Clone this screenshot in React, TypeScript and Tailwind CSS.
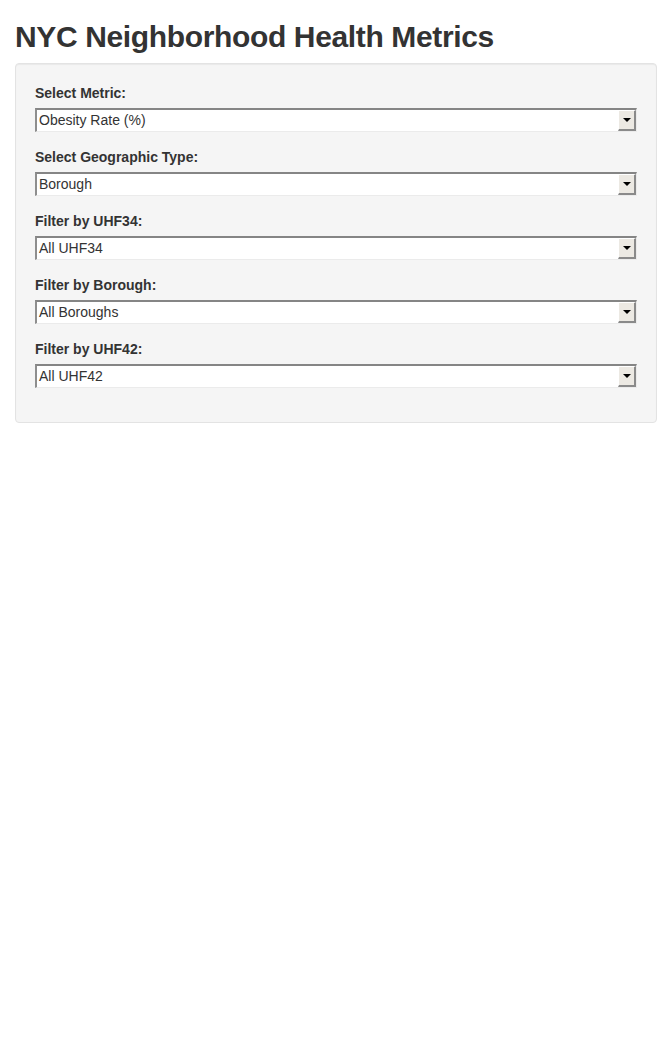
import React from 'react';

const filters = [
  { label: 'Select Metric:', value: 'Obesity Rate (%)' },
  { label: 'Select Geographic Type:', value: 'Borough' },
  { label: 'Filter by UHF34:', value: 'All UHF34' },
  { label: 'Filter by Borough:', value: 'All Boroughs' },
  { label: 'Filter by UHF42:', value: 'All UHF42' },
];

function SelectBox({ value }: { value: string }) {
  return (
    <div className="flex h-[24px] bg-white border-t-2 border-l-2 border-t-[#858585] border-l-[#8e8e8e] border-b border-r border-b-[#ebebeb] border-r-[#ebebeb]">
      <div className="flex-1 flex items-center pl-[2px] pb-[1px] text-[14px] text-[#333] leading-none">{value}</div>
      <div className="w-[18px] flex items-center justify-center bg-[#ece9e3] border-t border-l border-white border-r-2 border-b-2 border-r-[#8a8a8a] border-b-[#8a8a8a]">
        <div className="w-0 h-0 border-l-[4px] border-r-[4px] border-t-[4px] border-l-transparent border-r-transparent border-t-black" />
      </div>
    </div>
  );
}

export default function App() {
  return (
    <div className="min-h-[1043px] bg-white px-[15px] text-[#333]" style={{ fontFamily: '"Liberation Sans", Arial, sans-serif' }}>
      <h2 className="text-[30px] leading-[33px] font-bold tracking-[-0.36px] pt-[20px] mb-[10px]">NYC Neighborhood Health Metrics</h2>
      <div className="bg-[#f5f5f5] border border-[#e3e3e3] rounded-[4px] p-[19px] shadow-[inset_0_1px_1px_rgba(0,0,0,0.05)]">
        {filters.map((f, i) => (
          <div key={i} className="mb-[15px]">
            <label className="block text-[14px] leading-[20px] font-bold mb-[5px]">{f.label}</label>
            <SelectBox value={f.value} />
          </div>
        ))}
      </div>
    </div>
  );
}
